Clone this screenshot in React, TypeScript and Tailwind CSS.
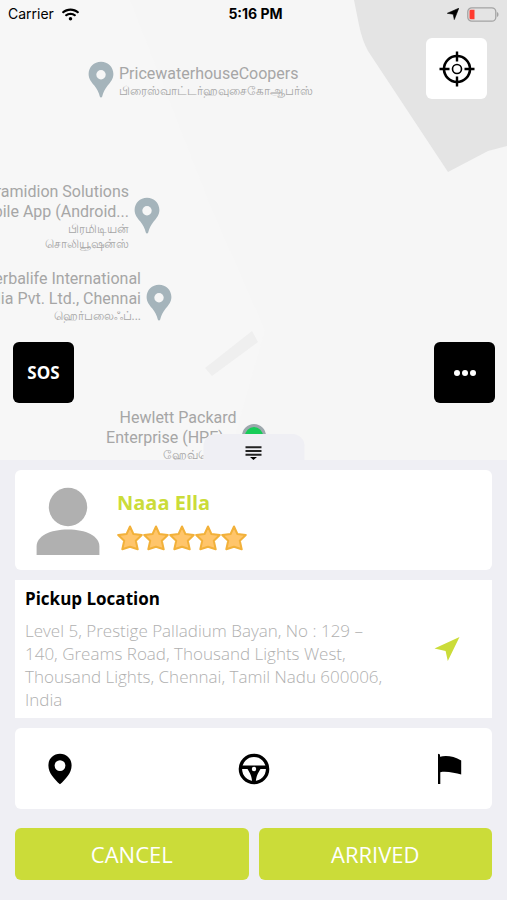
import { FaWifi } from "react-icons/fa";

const places = [
  {
    name: ["Pyramidion Solutions", "Mobile App (Android..."],
    local: ["பிரமிடியன்", "சொலியூஷன்ஸ்"],
    box: "left-0 top-[182px] w-[160px]",
  },
  {
    name: ["Herbalife International", "India Pvt. Ltd., Chennai"],
    local: ["ஹெர்பலைஃப்..."],
    box: "left-0 top-[269px] w-[172px]",
  },
];

const MapPin = () => (
  <svg viewBox="0 0 26 37" className="h-[37px] w-[26px] shrink-0">
    <path
      d="M13 .8C6 .8.6 6.200.6 13c0 5 3 8.200 5.900 11.800 2.500 3.100 4.300 6.700 5.300 10.800.3 1.200 2.100 1.200 2.400 0 1-4.100 2.800-7.700 5.300-10.800C22.400 21.200 25.400 18 25.400 13 25.400 6.200 20 .8 13 .8z"
      fill="#a5b4bb"
    />
    <circle cx="13" cy="13.700" r="4.700" fill="#f6f6f6" />
  </svg>
);

const StatusBar = () => {
  return (
    <div className="absolute inset-x-0 top-0 z-10 grid h-7 grid-cols-3 items-center px-2 font-[Inter,sans-serif] text-sm text-black">
      <div className="flex items-center gap-2">
        <span>Carrier</span>
        <FaWifi size={17} />
      </div>
      <span className="pl-1 text-center font-bold">5:16 PM</span>
      <div className="flex items-center justify-end gap-2">
        <svg viewBox="0 0 12 12" className="h-3 w-3">
          <path d="M11.800.2L7.300 11.600 6.200 6.200.3 5.300z" fill="#000" stroke="#000" strokeWidth=".6" />
        </svg>
        <svg viewBox="0 0 32 15" className="h-[15px] w-8">
          <rect
            x=".8"
            y=".8"
            width="28"
            height="13.400"
            rx="4"
            fill="none"
            stroke="#a3a3a3"
            strokeWidth="1.300"
          />
          <path d="M3.800 2.700H7.500V12.300H3.800Q2.500 12.300 2.500 11V4Q2.500 2.700 3.800 2.700z" fill="#ff3b30" />
          <path d="M30 5v5c2-.8 2-4.200 0-5z" fill="#a3a3a3" />
        </svg>
      </div>
    </div>
  );
};

const MapView = () => {
  return (
    <div className="relative min-h-[460px] flex-1 overflow-hidden bg-[#f6f6f6] font-[Roboto,sans-serif] text-base leading-5 text-[#a6a6a6]">
      <svg
        viewBox="0 0 507 460"
        preserveAspectRatio="xMaxYMin slice"
        className="absolute inset-0 h-full w-full"
      >
        <path d="M130 0L212 210 265 330 228 460H0V0z" fill="#f7f7f7" />
        <path d="M354 0L359 25Q362 40 368 51L448 172 488 151 507 146V0z" fill="#e4e4e4" />
        <path d="M205 368L252 331 258 342 212 376z" fill="#efefef" />
      </svg>

      <div className="absolute left-[88px] top-[61px] flex gap-[5px]">
        <MapPin />
        <div className="pt-[3px] whitespace-nowrap">
          <p>PricewaterhouseCoopers</p>
          <p className="text-xs leading-[15px]">பிரைஸ்வாட்டர்ஹவுசைகோஆபர்ஸ்</p>
        </div>
      </div>

      {places.map((place) => (
        <div
          key={place.name[0]}
          className={`absolute flex items-start justify-end gap-[5px] whitespace-nowrap text-right ${place.box}`}
        >
          <div>
            {place.name.map((line) => (
              <p key={line}>{line}</p>
            ))}
            {place.local.map((line) => (
              <p key={line} className="text-xs leading-[15px]">
                {line}
              </p>
            ))}
          </div>
          <div className="pt-[15px] pb-2">
            <MapPin />
          </div>
        </div>
      ))}

      <div className="absolute right-1/2 top-[408px] mr-[17px] whitespace-nowrap text-right">
        <p>Hewlett Packard</p>
        <p>Enterprise (HPE)...</p>
        <p className="text-xs leading-[15px]">ஹேவ்லெட்...</p>
      </div>
      <div className="absolute bottom-3 left-1/2 h-6 w-6 -translate-x-1/2 rounded-full border-[3px] border-[#9da8ad] bg-[#17cc58]" />

      <button
        aria-label="My location"
        className="absolute right-5 top-[38px] flex h-[61px] w-[61px] items-center justify-center rounded-md bg-white"
      >
        <svg viewBox="0 0 36 36" className="h-9 w-9" fill="none" stroke="#000">
          <circle cx="18" cy="18" r="13" strokeWidth="2.600" />
          <circle cx="18" cy="18" r="4.500" strokeWidth="1.600" />
          <path d="M18 .5v10M18 25.500v10M.5 18h10M25.500 18h10" strokeWidth="2.400" />
        </svg>
      </button>
      <button className="absolute bottom-[57px] left-[13px] h-[61px] w-[61px] rounded-md bg-black font-['Open_Sans',sans-serif] text-[17px] font-bold text-white">
        SOS
      </button>
      <button
        aria-label="More options"
        className="absolute bottom-[57px] right-3 flex h-[61px] w-[61px] items-center justify-center gap-[2px] rounded-md bg-black"
      >
        <span className="h-[6px] w-[6px] rounded-full bg-white" />
        <span className="h-[6px] w-[6px] rounded-full bg-white" />
        <span className="h-[6px] w-[6px] rounded-full bg-white" />
      </button>

      <button
        aria-label="Collapse details"
        className="absolute bottom-0 left-1/2 flex h-[26px] w-[101px] -translate-x-1/2 items-center justify-center rounded-t-xl bg-[#efeff4] pt-3"
      >
        <svg viewBox="0 0 18 16" className="h-4 w-[18px]">
          <path
            d="M1 2.200h16M1 6h16M1 9.800h16"
            stroke="#222"
            strokeWidth="1.900"
          />
          <path d="M5.500 12h7L9 15z" fill="#000" />
        </svg>
      </button>
    </div>
  );
};

const Star = () => (
  <svg viewBox="0 0 26 26" className="h-[26px] w-[26px]">
    <path
      d="M13 1.500L16.400 9 24.800 10 18.800 15.700 20.700 24.300 13 21.700 5.300 24.300 7.200 15.700 1.200 10 9.600 9z"
      fill="#ffc56b"
      stroke="#f2b13a"
      strokeWidth="2"
      strokeLinejoin="round"
    />
  </svg>
);

const DriverCard = () => {
  return (
    <div className="flex h-[100px] items-center rounded-md bg-white px-[21px]">
      <svg viewBox="0 0 64 70" className="h-[70px] w-16">
        <circle cx="32" cy="22" r="19.200" fill="#b0b0b0" />
        <path d="M.6 70V61.500C.6 51 14 44.500 32 44.500S63.400 51 63.400 61.500V70z" fill="#b0b0b0" />
      </svg>
      <div className="ml-[17px]">
        <h1 className="text-xl leading-7 font-bold text-[#cbdc39]">Naaa Ella</h1>
        <div className="mt-2 flex" role="img" aria-label="5 out of 5 stars">
          <Star />
          <Star />
          <Star />
          <Star />
          <Star />
        </div>
      </div>
    </div>
  );
};

const PickupCard = () => {
  return (
    <div className="flex min-h-[138px] items-center justify-between bg-white pr-8 pl-[10px]">
      <div className="max-w-[370px]">
        <h2 className="text-[17px] leading-6 font-bold text-black">Pickup Location</h2>
        <p className="mt-2 text-[17px] leading-[23px] font-light text-[#b0b0b0]">
          Level 5, Prestige Palladium Bayan, No : 129 – 140, Greams Road,
          Thousand Lights West, Thousand Lights, Chennai, Tamil Nadu 600006,
          India
        </p>
      </div>
      <button aria-label="Navigate">
        <svg viewBox="0 0 26 26" className="h-[26px] w-[26px]">
          <path d="M25.500 1L13.800 25 11.600 15 .5 12.500z" fill="#cbdc39" />
        </svg>
      </button>
    </div>
  );
};

const TripSteps = () => {
  return (
    <div className="flex h-[81px] items-center justify-between rounded-md bg-white px-[29px]">
      <svg viewBox="0 0 32 32" className="h-8 w-8">
        <path
          d="M16 .8C9.300.8 4.400 5.800 4.400 12.400c0 7.600 6 13.600 11.600 18.900 5.600-5.300 11.600-11.300 11.600-18.900C27.600 5.800 22.700.8 16 .8zm0 6.400a5.400 5.400 0 110 10.800 5.400 5.400 0 010-10.800z"
          fill="#000"
        />
      </svg>
      <svg viewBox="0 0 32 32" className="h-8 w-8">
        <circle cx="16" cy="16" r="13.600" fill="none" stroke="#000" strokeWidth="3.400" />
        <path
          d="M3 12.500H29V16H22.500C20 20 18.300 23 17.800 29H14.200C13.700 23 12 20 9.500 16H3z"
          fill="#000"
        />
        <circle cx="16" cy="16" r="2.200" fill="#fff" />
      </svg>
      <svg viewBox="0 0 32 32" className="h-8 w-8">
        <path
          d="M7 .8L9 1.600V3.800C15 2.200 23 3.200 30.200 7.500V21.500C24 20 16 18 9.300 19.200V31H7z"
          fill="#000"
        />
      </svg>
    </div>
  );
};

const App = () => {
  return (
    <div className="relative flex min-h-screen w-full flex-col bg-[#efeff4] font-['Open_Sans',sans-serif]">
      <StatusBar />
      <MapView />
      <div className="flex flex-col gap-[10px] px-[15px] pt-[10px] pb-5">
        <DriverCard />
        <PickupCard />
        <TripSteps />
        <div className="mt-[9px] grid grid-cols-2 gap-[10px]">
          <button className="h-[52px] rounded-md bg-[#cbdc39] text-[22px] text-white">
            CANCEL
          </button>
          <button className="h-[52px] rounded-md bg-[#cbdc39] text-[22px] text-white">
            ARRIVED
          </button>
        </div>
      </div>
    </div>
  );
};

export default App;
